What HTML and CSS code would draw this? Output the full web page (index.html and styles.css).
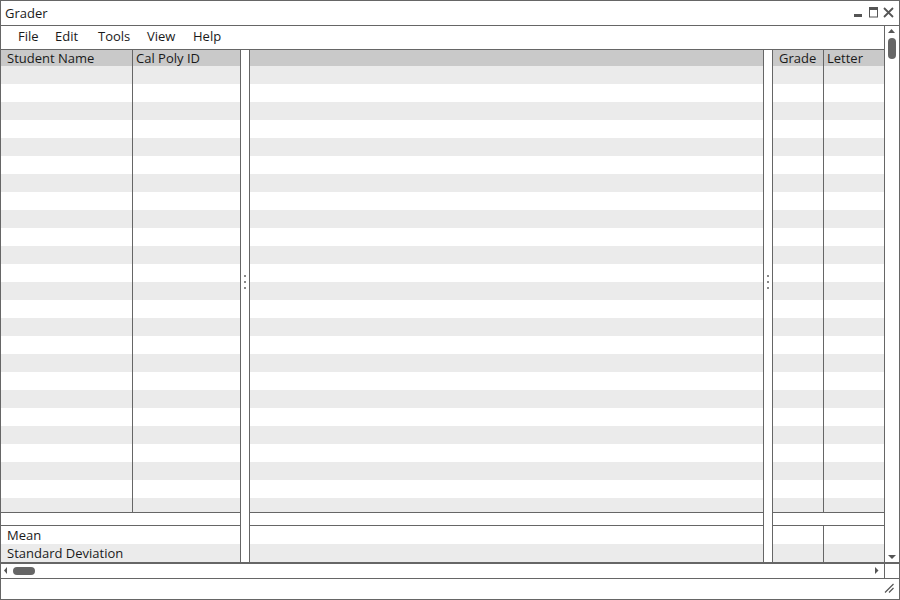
FILE: index.html
```html
<!DOCTYPE html>
<html lang="en">
<head>
<meta charset="utf-8">
<title>Grader</title>
<link rel="stylesheet" href="styles.css">
</head>
<body>
<div class="window">
  <header class="titlebar">
    <span class="title">Grader</span>
    <svg class="controls" width="42" height="24" viewBox="0 0 42 24" aria-hidden="true">
      <rect x="1" y="13" width="8" height="3" fill="#555"/>
      <rect x="16" y="6" width="9" height="3" fill="#555"/>
      <rect x="16.5" y="6.5" width="8" height="9.5" fill="none" stroke="#555" stroke-width="1"/>
      <path d="M31 7 L40 16 M40 7 L31 16" stroke="#555" stroke-width="1.8" fill="none"/>
    </svg>
  </header>

  <div class="workspace">
    <div class="content">
      <nav class="menubar">
        <span class="menu-item">File</span>
        <span class="menu-item">Edit</span>
        <span class="menu-item">Tools</span>
        <span class="menu-item">View</span>
        <span class="menu-item">Help</span>
      </nav>

      <main class="panes">
        <section class="panel panel-left">
          <div class="grid grid-left">
            <div class="col col-name"><div class="th">Student Name</div><div class="cells"></div></div>
            <div class="col col-id"><div class="th">Cal Poly ID</div><div class="cells"></div></div>
          </div>
          <div class="gap-row"></div>
          <div class="summary">
            <div class="sum-row">Mean</div>
            <div class="sum-row alt">Standard Deviation</div>
          </div>
        </section>

        <div class="splitter"><span class="dot"></span><span class="dot"></span><span class="dot"></span></div>

        <section class="panel panel-mid">
          <div class="grid">
            <div class="col"><div class="th"></div><div class="cells"></div></div>
          </div>
          <div class="gap-row"></div>
          <div class="summary">
            <div class="sum-row"></div>
            <div class="sum-row alt"></div>
          </div>
        </section>

        <div class="splitter"><span class="dot"></span><span class="dot"></span><span class="dot"></span></div>

        <section class="panel panel-right">
          <div class="grid grid-right">
            <div class="col col-grade"><div class="th">Grade</div><div class="cells"></div></div>
            <div class="col col-letter"><div class="th">Letter</div><div class="cells"></div></div>
          </div>
          <div class="gap-row"></div>
          <div class="summary summary-right">
            <div class="sum-col col-grade"><div class="sum-row"></div><div class="sum-row alt"></div></div>
            <div class="sum-col"><div class="sum-row"></div><div class="sum-row alt"></div></div>
          </div>
        </section>
      </main>
    </div>

    <div class="vscroll">
      <svg width="14" height="12" viewBox="0 0 14 12" aria-hidden="true"><polygon points="3,7 10,7 6.5,3" fill="#555"/></svg>
      <div class="vthumb"></div>
      <svg class="down" width="14" height="10" viewBox="0 0 14 10" aria-hidden="true"><polygon points="3,3 11,3 7,7" fill="#555"/></svg>
    </div>
  </div>

  <div class="hscroll">
    <div class="htrack">
      <svg width="6" height="14" viewBox="0 0 6 14" aria-hidden="true"><polygon points="5,3 5,10 2,6.5" fill="#555"/></svg>
      <div class="hthumb"></div>
      <svg class="right" width="8" height="14" viewBox="0 0 8 14" aria-hidden="true"><polygon points="1,3 1,10 4.5,6.5" fill="#555"/></svg>
    </div>
    <div class="corner"></div>
  </div>

  <footer class="statusbar">
    <svg class="grip" width="14" height="20" viewBox="0 0 14 20" aria-hidden="true">
      <path d="M3 13.5 L11.5 5 M7 13.5 L11.5 9" stroke="#555" stroke-width="1.2" fill="none"/>
    </svg>
  </footer>
</div>
</body>
</html>
```

FILE: styles.css
```css
* { box-sizing: border-box; }

body {
  margin: 0;
  font-family: "Open Sans", "DejaVu Sans", sans-serif;
  font-size: 13px;
  color: #1a1a1a;
  background: #fff;
}

.window {
  width: 900px;
  height: 600px;
  border: 1px solid #666;
  display: flex;
  flex-direction: column;
  background: #fff;
  overflow: hidden;
}

.titlebar {
  height: 25px;
  flex: none;
  border-bottom: 1px solid #666;
  display: flex;
  align-items: flex-start;
  padding-left: 4px;
}
.title { line-height: 24px; }
.controls { margin-left: auto; margin-right: 4px; display: block; }

.workspace {
  flex: 1;
  display: flex;
  min-height: 0;
}

.content {
  flex: 1;
  display: flex;
  flex-direction: column;
  min-width: 0;
}

.menubar {
  height: 24px;
  flex: none;
  border-bottom: 1px solid #666;
  display: grid;
  grid-template-columns: 37px 43px 49px 46px auto;
  padding-left: 17px;
  line-height: 20px;
}

.panes {
  flex: 1;
  display: flex;
  min-height: 0;
}

.panel {
  display: flex;
  flex-direction: column;
  height: 100%;
}
.panel-left { width: 240px; border-right: 1px solid #666; }
.panel-mid { width: 515px; border-left: 1px solid #666; border-right: 1px solid #666; }
.panel-right { flex: 1; border-left: 1px solid #666; }

.grid {
  flex: 1;
  display: flex;
  min-height: 0;
}
.col {
  flex: 1;
  display: flex;
  flex-direction: column;
}
.col-name { flex: none; width: 132px; border-right: 1px solid #666; }
.col-grade { flex: none; width: 51px; border-right: 1px solid #666; }

.th {
  height: 16px;
  line-height: 16px;
  background: #c9c9c9;
  white-space: nowrap;
  padding-left: 3px;
}
.col-name .th, .col-grade .th { padding-left: 6px; }

.cells {
  flex: 1;
  background: repeating-linear-gradient(to bottom, #ebebeb 0 18px, #fff 18px 36px);
}

.gap-row {
  height: 14px;
  flex: none;
  border-top: 1px solid #666;
  border-bottom: 1px solid #666;
}

.summary { flex: none; }
.sum-row {
  height: 18px;
  line-height: 17px;
  padding-top: 1px;
  padding-left: 6px;
  white-space: nowrap;
}
.sum-row.alt { background: #ebebeb; }

.summary-right { display: flex; }
.sum-col { flex: 1; }
.summary-right .col-grade { flex: none; width: 51px; }

.splitter {
  width: 8px;
  flex: none;
  display: flex;
  flex-direction: column;
  align-items: center;
  gap: 4px;
  padding-top: 225px;
}
.dot {
  width: 2px;
  height: 2px;
  background: #888;
}

.vscroll {
  width: 15px;
  flex: none;
  border-left: 1px solid #666;
  display: flex;
  flex-direction: column;
}
.vscroll svg { display: block; }
.vthumb {
  width: 8px;
  height: 21px;
  margin-left: 3px;
  border-radius: 4px;
  background: #666;
}
.vscroll .down { margin-top: auto; }

.hscroll {
  height: 17px;
  flex: none;
  border-top: 2px solid #666;
  border-bottom: 1px solid #666;
  display: flex;
}
.htrack {
  flex: 1;
  display: flex;
  align-items: center;
  padding-left: 1px;
}
.htrack svg { display: block; }
.hthumb {
  width: 22px;
  height: 8px;
  margin-left: 5px;
  border-radius: 4px;
  background: #666;
}
.htrack .right { margin-left: auto; margin-right: 2px; }
.corner {
  width: 15px;
  flex: none;
  border-left: 1px solid #666;
}

.statusbar {
  height: 20px;
  flex: none;
  display: flex;
}
.grip { margin-left: auto; margin-right: 3px; display: block; }
```
